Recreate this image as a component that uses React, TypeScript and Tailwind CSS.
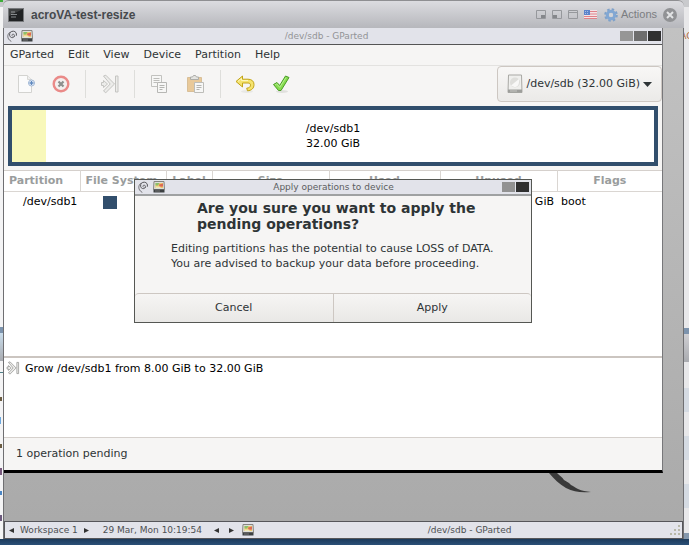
import React from "react";

const menuItems = ["GParted", "Edit", "View", "Device", "Partition", "Help"];

function Swirl() {
  return (
    <svg className="h-3 w-3 shrink-0" viewBox="0 0 12 12" fill="none" stroke="#55555a" strokeLinecap="round">
      <path d="M6.500 6.300C5.400 5.600 5.800 4.200 7 4.100 8.400 4 9 5.600 8.200 6.700" strokeWidth=".8" />
      <path d="M8.200 6.700C6.800 8.600 4 7.600 3.600 5.300 3.200 2.800 5.200 1 7.400 1.200 9.600 1.400 11 3.200 10.400 5.400" strokeWidth="1" />
      <path d="M4 2.200C1.600 3.600 1.200 6.800 2.600 9c.6 1 1.400 1.700 2.400 2.300" strokeWidth=".8" />
    </svg>
  );
}

function DiskMapIcon() {
  return (
    <svg className="h-3 w-3 shrink-0" viewBox="0 0 12 12">
      <path d="M1 .5h10l.5 8H.5z" fill="#deded8" stroke="#85857f" />
      <rect x="2.500" y="2" width="7.500" height="5" fill="#efc86a" />
      <path d="M2.500 2h4l-1.500 2.500H2.500z" fill="#8cc06c" />
      <path d="M6 3.500l4-1v3L6.500 6z" fill="#dd6a55" />
      <path d="M3 5.500h4.500v1.500H3z" fill="#efe9b4" />
      <path d="M.5 8.500h11v3H.5z" fill="#3c4042" />
      <path d="M2 10h5" stroke="#777" />
    </svg>
  );
}

function NewFileIcon() {
  return (
    <svg className="h-5 w-5" viewBox="0 0 20 20">
      <path d="M2.500 1.500h9l4 4v13h-13z" fill="#fbfbfb" stroke="#d3d3d0" />
      <path d="M11.500 1.500v4h4" fill="#eee" stroke="#d8d8d5" />
      <circle cx="15.500" cy="9" r="3" fill="#f4f7fb" stroke="#9db5d5" />
      <path d="M15.500 7v4M13.500 9h4" stroke="#5f88be" strokeWidth="1.400" />
    </svg>
  );
}

function DeleteIcon() {
  return (
    <svg className="h-5 w-5" viewBox="0 0 20 20">
      <circle cx="10" cy="10" r="7.300" fill="#f4efee" stroke="#ea8a88" strokeWidth="2.400" />
      <path d="M7.500 7.500l5 5m0-5l-5 5" stroke="#8d8f8d" strokeWidth="2.200" />
    </svg>
  );
}

function ResizeIcon({ className }: { className: string }) {
  return (
    <svg className={className} viewBox="0 0 20 20" fill="#ececea" stroke="currentColor">
      <path d="M3.500 2l2.300-.8L14.500 10l-8.700 8.700L3.500 17l6.700-7z" />
      <path d="M1.500 8.500h2v-2l4 3.500-4 3.500v-2h-2z" />
      <path d="M15.500 2h2.500v16h-2.500z" />
    </svg>
  );
}

function CopyIcon() {
  return (
    <svg className="h-5 w-5" viewBox="0 0 20 20">
      <path d="M2.500 1.500h10v11h-10z" fill="#f7f7f6" stroke="#c2c2bf" />
      <path d="M4.500 4.500h6M4.500 6.500h6M4.500 8.500h4" stroke="#bdbdba" />
      <path d="M8.500 8.500h9v10h-9z" fill="#f7f7f6" stroke="#b7b7b4" />
      <path d="M10.500 11.500h5M10.500 13.500h5M10.500 15.500h3" stroke="#b4b4b1" />
    </svg>
  );
}

function PasteIcon() {
  return (
    <svg className="h-5 w-5" viewBox="0 0 20 20">
      <path d="M1.500 3.500h14v14h-14z" fill="#e9c999" stroke="#d8bf98" />
      <path d="M4.500 5.500V3h2l1-1.500h2l1 1.500h2v2.500z" fill="#e4e4e1" stroke="#adada9" />
      <path d="M8.500 8.500h9v10h-9z" fill="#f7f7f6" stroke="#bdbdb9" />
      <path d="M10.500 11.500h5M10.500 13.500h5M10.500 15.500h3" stroke="#b4b4b1" />
    </svg>
  );
}

function UndoIcon() {
  return (
    <svg className="h-5 w-5" viewBox="0 0 20 20">
      <ellipse cx="12" cy="17.500" rx="6" ry="1.500" fill="#e8e8e5" />
      <path d="M1 7.500L7.500 2v3.200H13c3.700 0 6 2 6 5.300 0 3.700-2.300 6-6.500 6.300l-.8-2.600c2.300-.2 3.800-1.200 3.800-3.100 0-1.500-1-2.100-2.500-2.100H7.500v4z" fill="#f5e36e" stroke="#c2a418" strokeLinejoin="round" />
      <path d="M3 7.300l3.500-2.800v2H13" stroke="#fdf8bd" fill="none" />
    </svg>
  );
}

function CheckIcon() {
  return (
    <svg className="h-5 w-5" viewBox="0 0 20 20">
      <ellipse cx="10" cy="17.500" rx="6" ry="1.500" fill="#e0e0dd" />
      <path d="M1.500 10.500l3.500-2 2.700 3L13.500 2l3.500 1.500-8 13H6.500z" fill="#86dc4e" stroke="#4b9b27" strokeLinejoin="round" />
      <path d="M3.200 10.800l1.500-.9 3 3.400L14 3.500" fill="none" stroke="#b9f094" />
    </svg>
  );
}

function DriveIcon() {
  return (
    <svg className="h-5 w-4 shrink-0" viewBox="0 0 16 20">
      <path d="M1.500 1h13l.5 17.500H1z" fill="#efefed" stroke="#a9a9a5" />
      <path d="M1 15.500h14v3H1z" fill="#9d9e9b" />
      <circle cx="8" cy="8.500" r="5" fill="#dededb" />
      <path d="M4 11.500L12 5v3c0 3-2 5-4.500 5z" fill="#f8f8f7" />
      <path d="M3 17h7" stroke="#c6c6c2" />
    </svg>
  );
}

function WindowBoxes({ colors }: { colors: string[] }) {
  return (
    <div className="flex gap-px">
      {colors.map((c) => (
        <button key={c} aria-label="Window control" className={`h-[10px] w-[13px] ${c}`} />
      ))}
    </div>
  );
}

function Gear() {
  return (
    <svg className="h-3.5 w-3.5" viewBox="0 0 14 14">
      <circle cx="7" cy="7" r="5.700" fill="none" stroke="#7ea1ca" strokeWidth="2.200" strokeDasharray="2.400 2.077" />
      <circle cx="7" cy="7" r="3.700" fill="none" stroke="#82a7d3" strokeWidth="3" />
      <circle cx="7" cy="7" r="2.100" fill="#d3d5d9" />
    </svg>
  );
}

function Flag() {
  return (
    <svg className="h-[11px] w-[13px]" viewBox="0 0 13 11">
      <rect y="1" width="13" height="9" fill="#f3e4e6" />
      <path d="M0 2.500h13M0 5h13M0 7.500h13M0 9.500h13" stroke="#e08289" strokeWidth="1.100" />
      <rect y="1" width="6" height="5" fill="#5b83cb" />
      <path d="M1 2.500h4M1 4.500h4" stroke="#a4bbe4" strokeDasharray="1 1" />
    </svg>
  );
}

function ConsoleTitle() {
  return (
    <header className="flex h-7 shrink-0 items-center rounded-t-md border-t border-[#8f8f92] bg-linear-to-b from-[#dcdce0] to-[#b6b7bc] pr-[7px] pl-[5px] font-['Liberation_Sans',Arial,sans-serif] text-xs">
      <svg className="h-3.5 w-4" viewBox="0 0 16 14">
        <rect x=".5" y=".5" width="15" height="13" fill="#202224" stroke="#77797c" />
        <path d="M3 4h4M3 6.500h6M3 9h5" stroke="#85898c" />
        <path d="M1 1h14L1 8z" fill="#fff" opacity=".14" />
      </svg>
      <h1 className="ml-[7px] flex-1 font-bold text-[#46494d]">acroVA-test-resize</h1>
      <div className="flex items-center gap-[6px]">
        <svg className="h-[9px] w-[42px]" viewBox="0 0 42 9" fill="none" stroke="#96989c">
          <path d="M.5.500h9v8h-9zM16.500.5h9v8h-9zM32.500.5h9v8h-9zM32.500 2.500h9" />
          <path d="M5 5h4v3H5zM17 5h4v3h-4z" fill="#85878b" stroke="none" />
        </svg>
        <Flag />
        <button className="ml-px flex items-center gap-[3px] text-[11px] text-[#7b7d81]">
          <Gear />
          Actions
        </button>
        <button aria-label="Close">
          <svg className="h-3.5 w-3.5" viewBox="0 0 14 14">
            <circle cx="7" cy="7" r="7" fill="#919295" />
            <path d="M4 4l6 6m0-6l-6 6" stroke="#e2e3e5" strokeWidth="2" />
          </svg>
        </button>
      </div>
    </header>
  );
}

function Divider() {
  return <div className="h-7 w-px bg-[#dededb]" />;
}

function Toolbar() {
  return (
    <div className="flex h-[41px] shrink-0 items-center border-t border-[#e3e2e0] pb-1 pl-3">
      <button aria-label="New"><NewFileIcon /></button>
      <button aria-label="Delete" className="ml-[15px]"><DeleteIcon /></button>
      <div className="ml-[14px] flex items-center gap-[14px]">
        <Divider />
        <button aria-label="Resize"><ResizeIcon className="h-5 w-5 text-[#c4c4c1]" /></button>
        <Divider />
        <button aria-label="Copy"><CopyIcon /></button>
        <button aria-label="Paste" className="ml-[3px]"><PasteIcon /></button>
        <Divider />
        <button aria-label="Undo"><UndoIcon /></button>
        <button aria-label="Apply all" className="ml-[3px]"><CheckIcon /></button>
      </div>
      <button className="ml-auto flex h-9 items-center rounded border border-[#cdc7c2] bg-linear-to-b from-[#f8f7f6] to-[#ebeae8] px-[9px]">
        <DriveIcon />
        <span className="ml-[3px]">/dev/sdb (32.00 GiB)</span>
        <svg className="ml-[3px] h-[5px] w-[9px]" viewBox="0 0 9 5"><path d="M0 0h9L4.500 5z" fill="#2e3436" /></svg>
      </button>
    </div>
  );
}

function Partitions() {
  const th = "h-[21px] border-r border-b border-[#dad6d2] p-0";
  return (
    <table className="w-full table-fixed border-collapse border-t border-[#d5d0cc] whitespace-nowrap">
      <colgroup>
        <col className="w-[76px]" />
        <col className="w-[86px]" />
        <col className="w-[46px]" />
        <col className="w-[117px]" />
        <col className="w-[111px]" />
        <col className="w-[117px]" />
        <col />
      </colgroup>
      <thead className="text-[#9a9d9d]">
        <tr>
          <th className={`${th} pl-[5px] text-left`}>Partition</th>
          <th className={`${th} overflow-hidden pl-[5px] text-left`}>File System</th>
          <th className={th}>Label</th>
          <th className={th}>Size</th>
          <th className={th}>Used</th>
          <th className={th}>Unused</th>
          <th className="h-[21px] border-b border-[#dad6d2] p-0">Flags</th>
        </tr>
      </thead>
      <tbody className="text-black">
        <tr>
          <td className="h-[21px] p-0 pl-[19px]">/dev/sdb1</td>
          <td className="p-0 pl-[23px]"><div className="h-[13px] w-[14px] bg-[#314e6c]" /></td>
          <td />
          <td />
          <td />
          <td className="p-0 pr-[3px] text-right">GiB</td>
          <td className="p-0 pl-1">boot</td>
        </tr>
      </tbody>
    </table>
  );
}

function ConfirmDialog() {
  const action = "h-[29px] flex-1 border-t border-[#cdc7c2] bg-linear-to-b from-[#f6f5f4] to-[#e9e8e6]";
  return (
    <div className="absolute inset-x-0 top-0 -bottom-[3px] flex items-center justify-center">
      <div role="dialog" aria-labelledby="confirm-title" className="w-[398px] border border-[#555753] bg-[#f6f5f4]">
        <div className="flex h-4 items-center border-b-2 border-[#9fa1a2] bg-[#e2e3ea] px-0.5">
          <Swirl />
          <span className="ml-1 flex"><DiskMapIcon /></span>
          <span className="flex-1 text-center text-[9px] text-[#5b5d60]">Apply operations to device</span>
          <WindowBoxes colors={["bg-[#929292]", "bg-[#303030]"]} />
        </div>
        <h2 id="confirm-title" className="mt-1 pl-[62px] text-[14px] leading-4 font-bold">
          Are you sure you want to apply the<br />pending operations?
        </h2>
        <p className="mt-[9px] pl-9 leading-[15px]">
          Editing partitions has the potential to cause LOSS of DATA.<br />
          You are advised to backup your data before proceeding.
        </p>
        <div className="mt-[22px] flex">
          <button className={`${action} rounded-tl border-r`}>Cancel</button>
          <button className={`${action} rounded-tr`}>Apply</button>
        </div>
      </div>
    </div>
  );
}

function PartitionEditor() {
  return (
    <section className="relative mr-[20px] flex h-[445px] flex-col border-r border-b-3 border-r-[#77777a] border-b-black bg-[#f6f5f4]">
      <div className="flex h-[17px] shrink-0 items-center border-b border-[#555] bg-[#e2e3ea] pr-px pl-0.5">
        <Swirl />
        <span className="ml-[3px] flex"><DiskMapIcon /></span>
        <span className="flex-1 text-center text-[9px] text-[#929396]">/dev/sdb - GParted</span>
        <WindowBoxes colors={["bg-[#969696]", "bg-[#6d6d6d]", "bg-[#303030]"]} />
      </div>
      <nav className="flex h-5 shrink-0 items-center gap-[14px] pl-1.5">
        {menuItems.map((m) => <button key={m}>{m}</button>)}
      </nav>
      <Toolbar />
      <div className="mr-1 ml-1 flex h-[60px] shrink-0 border-4 border-[#314e6c] bg-white">
        <div className="w-[34px] bg-[#f8f8ba]" />
        <div className="flex flex-1 flex-col justify-center pr-[34px] text-center leading-[15px] text-black">
          <span>/dev/sdb1</span>
          <span>32.00 GiB</span>
        </div>
      </div>
      <div className="mt-1 h-[186px] shrink-0 bg-white"><Partitions /></div>
      <div className="flex h-[82px] shrink-0 items-start border-t-2 border-b border-t-[#cbc5c0] border-b-[#d5d0cc] bg-white pt-[3px] pl-0.5 text-black">
        <ResizeIcon className="h-3.5 w-3.5 text-[#8c8c8a]" />
        <span className="ml-[5px] leading-[15px]">Grow /dev/sdb1 from 8.00 GiB to 32.00 GiB</span>
      </div>
      <footer className="flex flex-1 items-center pl-3">1 operation pending</footer>
      <ConfirmDialog />
    </section>
  );
}

function Arrow({ right = false }: { right?: boolean }) {
  return (
    <svg className="h-[5px] w-[5px] shrink-0" viewBox="0 0 5 5">
      <path d={right ? "M0 0l5 2.500L0 5z" : "M5 0L0 2.500 5 5z"} fill="#333" />
    </svg>
  );
}

function Taskbar() {
  return (
    <footer className="flex h-[18px] shrink-0 items-center border border-[#56565a] bg-[#e2e3ea] pl-1 text-[9px] text-[#4d4f52]">
      <Arrow />
      <span className="mx-1.5">Workspace 1</span>
      <Arrow right />
      <time className="ml-3.5">29 Mar, Mon 10:19:54</time>
      <span className="ml-3 flex"><Arrow /></span>
      <span className="mr-2 ml-2.5 flex"><Arrow right /></span>
      <DiskMapIcon />
      <span className="flex-1 pl-4 text-center">/dev/sdb - GParted</span>
      <svg className="mr-px h-3 w-3" viewBox="0 0 12 12" fill="#b8b8a8">
        <path d="M9 1h2v2H9zM9 5h2v2H9zM5 5h2v2H5zM9 9h2v2H9zM5 9h2v2H5zM1 9h2v2H1z" />
      </svg>
    </footer>
  );
}

export default function App() {
  return (
    <div className="flex h-screen flex-col overflow-hidden bg-[#c9cacd] font-['DejaVu_Sans',sans-serif] text-[11px] leading-[14px] text-[#2e3436]">
      <div className="flex min-h-0 flex-1">
        <div className="flex w-[3px] shrink-0 flex-col bg-[#f4f4f5]">
          <div className="h-[7px] border-t-2 border-[#3fae3a] bg-[#c9cacd]" />
          <div className="h-80" />
          <div className="h-1.5 bg-[#7c93ad]" />
          <div className="h-7 bg-linear-to-b from-[#c9ddec] to-[#a9abb0]" />
          <div className="mt-[11px] h-px bg-[#4e7e87]" />
          <div className="mt-6 h-1 w-0.5 bg-[#6b5c42]" />
          <div className="mt-4 h-[7px] w-px bg-[#6ba7de]" />
          <div className="mt-5 h-1 w-0.5 bg-[#6b5c42]" />
          <div className="mt-5 h-[7px] w-0.5 bg-[#77597c]" />
          <div className="mt-4 h-1 w-0.5 bg-[#4b86c4]" />
          <div className="mt-5 h-1.5 w-0.5 bg-[#6d5a7d]" />
        </div>
        <main className="flex min-w-0 flex-1 flex-col">
          <ConsoleTitle />
          <div className="flex min-h-0 flex-1 flex-col border-x border-[#6f6f72] bg-linear-to-b from-[#c2c2c2] to-[#a9a9a9]">
            <PartitionEditor />
            <div className="flex min-h-0 flex-1 justify-end pr-[91px]">
              <svg className="h-5 w-[43px]" viewBox="0 0 43 20">
                <path d="M0 0h8c3 3 5 4 7 7l5 3 2 2c3 1 4 3 7 4 4 2 8 2 13 3-10 1-17 0-25-4C10 11 5 6 0 0z" fill="#393939" />
              </svg>
            </div>
            <Taskbar />
          </div>
        </main>
        <div className="flex w-[5px] shrink-0 flex-col bg-[#e8e8ea]">
          <div className="h-[7px] bg-[#c9cacd]" />
          <div className="mt-[22px] flex h-3.5 justify-center overflow-hidden text-[9px] text-[#b06a3c]">AC</div>
          <div className="mt-[285px] h-1.5 bg-[#7c93ad]" />
          <div className="h-7 bg-linear-to-b from-[#cfcfd3] to-[#a9abb0]" />
          <div className="mt-[26px] h-6 bg-[#d5dbe3]" />
          <div className="mt-6 h-6 bg-[#d5dbe3]" />
          <div className="mt-6 h-6 bg-[#d5dbe3]" />
          <div className="mt-auto h-1.5 bg-[#8498ae]" />
        </div>
      </div>
      <div className="h-1.5 shrink-0 bg-linear-to-b from-[#1c3a5b] to-[#2b4f77]" />
    </div>
  );
}
